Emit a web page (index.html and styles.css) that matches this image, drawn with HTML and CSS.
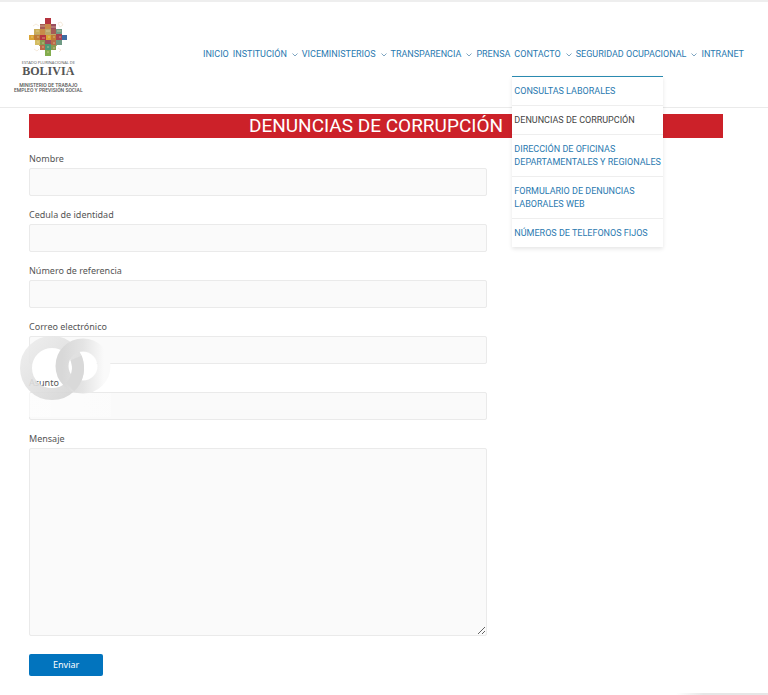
FILE: index.html
```html
<!DOCTYPE html>
<html lang="es">
<head>
<meta charset="utf-8">
<meta name="viewport" content="width=device-width, initial-scale=1">
<title>Denuncias de corrupción</title>
<link rel="stylesheet" href="styles.css">
</head>
<body>
<header class="site-header">
  <a class="brand" href="#">
    <svg class="brand-mark" viewBox="0 0 40 40" aria-hidden="true">
      <path fill="#b9a56a" d="M17 7h6v5h6v5h5v6h-5v6h-6v5h-6v-5h-6v-6H6v-6h5v-5h6z"/>
      <path fill="#b5343f" d="M17 1h6v6h-6zM12 18h6v5h-6z"/>
      <path fill="#a65a55" d="M12 7h5v5h-5zM23 12h5v5h-5z"/>
      <path fill="#9a4f60" d="M23 7h5v5h-5zM17 23h6v4h-6z"/>
      <path fill="#c98a4a" d="M17 7h6v5h-6zM12 12h5v6h-5z"/>
      <path fill="#c9ae5a" d="M6 12h6v5H6z"/>
      <path fill="#6f9a84" d="M28 12h6v5h-6zM28 23h6v5h-6z"/>
      <path fill="#d4bd62" d="M7 23h5v5H7z"/>
      <path fill="#d9a435" d="M1 18h5v5H1zM18 18h5v5h-5z"/>
      <path fill="#c07c35" d="M6 18h6v5H6zM23 18h5v5h-5z"/>
      <path fill="#a84350" d="M28 17h6v6h-6z"/>
      <path fill="#3f6ba3" d="M34 18h5v5h-5z"/>
      <path fill="#8a9b50" d="M12 23h5v5h-5zM23 28h5v5h-5z"/>
      <path fill="#b96b49" d="M23 23h5v5h-5zM12 28h5v5h-5z"/>
      <path fill="#4d9a78" d="M17 27h6v6h-6z"/>
      <path fill="#83ad4e" d="M17 33h6v6h-6z"/>
      <path fill="none" stroke="#ead9a8" stroke-width=".6" d="M12 9h5m6 1h5M8 14h3m7 0h4m7 0h4M3 20h2m4 0h2m3 1h3m3-1h2m3 0h2m4 0h2M9 25h2m3 1h2m9 0h2M19 30h2m-7 0h2m9 1h2m-8 4h2"/>
      <path fill="none" stroke="#f3e6d3" stroke-width=".8" d="m5 9 3-2 3 2M30 6l3-1 2 3-3 2zM6 32l3 2 2-2M30 31l3 2-2 2"/>
    </svg>
    <span class="brand-state">ESTADO PLURINACIONAL DE</span>
    <span class="brand-country">BOLIVIA</span>
    <span class="brand-ministry">MINISTERIO DE TRABAJO<br>EMPLEO Y PREVISIÓN SOCIAL</span>
  </a>
  <nav aria-label="Principal">
    <ul class="menu">
      <li><a href="#">INICIO</a></li>
      <li><a href="#">INSTITUCIÓN<svg class="chevron" viewBox="0 0 6 4" aria-hidden="true"><path d="M.5.5 3 3 5.500.5"/></svg></a></li>
      <li><a href="#">VICEMINISTERIOS<svg class="chevron" viewBox="0 0 6 4" aria-hidden="true"><path d="M.5.5 3 3 5.500.5"/></svg></a></li>
      <li><a href="#">TRANSPARENCIA<svg class="chevron" viewBox="0 0 6 4" aria-hidden="true"><path d="M.5.5 3 3 5.500.5"/></svg></a></li>
      <li><a href="#">PRENSA</a></li>
      <li class="has-submenu"><a href="#">CONTACTO<svg class="chevron" viewBox="0 0 6 4" aria-hidden="true"><path d="M.5.5 3 3 5.500.5"/></svg></a>
        <ul class="submenu">
          <li><a href="#">CONSULTAS LABORALES</a></li>
          <li><a href="#" class="current" aria-current="page">DENUNCIAS DE CORRUPCIÓN</a></li>
          <li><a href="#">DIRECCIÓN DE OFICINAS<br>DEPARTAMENTALES Y REGIONALES</a></li>
          <li><a href="#">FORMULARIO DE DENUNCIAS<br>LABORALES WEB</a></li>
          <li><a href="#">NÚMEROS DE TELEFONOS FIJOS</a></li>
        </ul>
      </li>
      <li><a href="#">SEGURIDAD OCUPACIONAL<svg class="chevron" viewBox="0 0 6 4" aria-hidden="true"><path d="M.5.5 3 3 5.500.5"/></svg></a></li>
      <li><a href="#">INTRANET</a></li>
    </ul>
  </nav>
</header>
<main class="content">
  <h1 class="page-title">DENUNCIAS DE CORRUPCIÓN</h1>
  <form class="report-form">
    <div class="field"><label for="nombre">Nombre</label><input type="text" id="nombre"></div>
    <div class="field"><label for="cedula">Cedula de identidad</label><input type="text" id="cedula"></div>
    <div class="field"><label for="referencia">Número de referencia</label><input type="text" id="referencia"></div>
    <div class="field"><label for="correo">Correo electrónico</label><input type="email" id="correo"></div>
    <div class="field"><label for="asunto">Asunto</label><input type="text" id="asunto">
      <svg class="watermark" viewBox="0 0 96 84" aria-hidden="true">
        <defs>
          <linearGradient id="ringLeft" x1="0" y1="0" x2="1" y2="1"><stop offset="0" stop-color="#ececec"/><stop offset="1" stop-color="#d4d4d4"/></linearGradient>
          <linearGradient id="ringRight" x1="0" y1="0" x2="1" y2="0"><stop offset="0" stop-color="#d8d8d8"/><stop offset=".5" stop-color="#e4e4e4"/><stop offset="1" stop-color="#fafafa"/></linearGradient>
          <linearGradient id="haze" x1="0" y1="0" x2="1" y2="0"><stop offset="0" stop-color="#fff" stop-opacity=".6"/><stop offset="1" stop-color="#fff" stop-opacity=".3"/></linearGradient>
        </defs>
        <path fill="url(#haze)" d="M2 58h90v24H2z"/>
        <path fill="#fff" d="M12 34a21 21 0 0 1 42 0z"/>
        <circle cx="64" cy="31" r="14" fill="#fff"/>
        <circle cx="33" cy="33" r="26" fill="none" stroke="url(#ringLeft)" stroke-width="12" stroke-opacity=".9"/>
        <circle cx="64" cy="31" r="21" fill="none" stroke="url(#ringRight)" stroke-width="13"/>
        <path fill="none" stroke="#d9d9d9" stroke-width="12" d="M57 23a26 26 0 0 1-6 29"/>
      </svg>
    </div>
    <div class="field"><label for="mensaje">Mensaje</label><textarea id="mensaje"></textarea></div>
    <button type="submit">Enviar</button>
  </form>
</main>
<div class="page-edge"></div>
</body>
</html>
```
FILE: styles.css
```css
* { box-sizing: border-box; }
body {
  display: flex;
  flex-direction: column;
  min-height: 100vh;
  margin: 0;
  background: #fff;
  color: #555;
  font: 9px/18px "Noto Sans", "Open Sans", sans-serif;
}
a { color: #2a7ab0; text-decoration: none; }
ul { list-style: none; margin: 0; padding: 0; }

.site-header {
  display: flex;
  align-items: center;
  justify-content: space-between;
  min-height: 108px;
  padding: 0 22px 0 14px;
  border-top: 2px solid #eee;
  border-bottom: 1px solid #eaeaea;
}
.brand {
  display: flex;
  flex-direction: column;
  align-items: center;
  color: #555;
  text-align: center;
}
.brand-mark { width: 40px; height: 40px; }
.brand-state { margin-top: 2px; font: 4px/8px "Open Sans", sans-serif; }
.brand-country { font: bold 12px/8px "Liberation Serif", serif; }
.brand-ministry { margin-top: 8px; font: 500 5px/5px Roboto, sans-serif; }

.menu { display: flex; font: 9px/13px Roboto, sans-serif; }
.menu > li > a { display: flex; align-items: center; padding: 8px 2px; }
.chevron {
  width: 6px;
  height: 4px;
  margin-left: 5px;
  fill: none;
  stroke: #7fa6c2;
}
.has-submenu { position: relative; }
.submenu {
  position: absolute;
  top: 36px;
  left: 0;
  z-index: 2;
  width: 151px;
  background: #fff;
  border-top: 1px solid #2a8ab0;
  box-shadow: 0 2px 4px rgba(0, 0, 0, .1);
  white-space: nowrap;
}
.submenu li + li { border-top: 1px solid #eee; }
.submenu a { display: block; padding: 8px 2px 7px; }
.submenu .current { color: #444; }

.content { flex: 1; padding: 6px 45px 16px 29px; }
.page-title {
  margin: 0;
  background: #cc2129;
  color: #fff;
  font: 19px/24px Roboto, sans-serif;
  text-align: center;
}
.report-form { width: 66%; padding-top: 12px; }
.field { position: relative; margin-bottom: 10px; }
label { display: block; }
input, textarea {
  display: block;
  width: 100%;
  height: 28px;
  padding: 4px 8px;
  background: #fafafa;
  border: 1px solid #eaeaea;
  border-radius: 2px;
  font: inherit;
}
textarea { height: 188px; resize: vertical; }
.watermark {
  position: absolute;
  left: -10px;
  top: -39px;
  width: 96px;
  height: 84px;
  pointer-events: none;
}
button {
  margin-top: 8px;
  padding: 2px 24px;
  background: #0274be;
  border: 0;
  border-radius: 2px;
  color: #fff;
  font: inherit;
}
.page-edge {
  width: 12%;
  height: 2px;
  margin-left: auto;
  background: linear-gradient(to right, #fff, #e6e6e6 30%);
}
```
